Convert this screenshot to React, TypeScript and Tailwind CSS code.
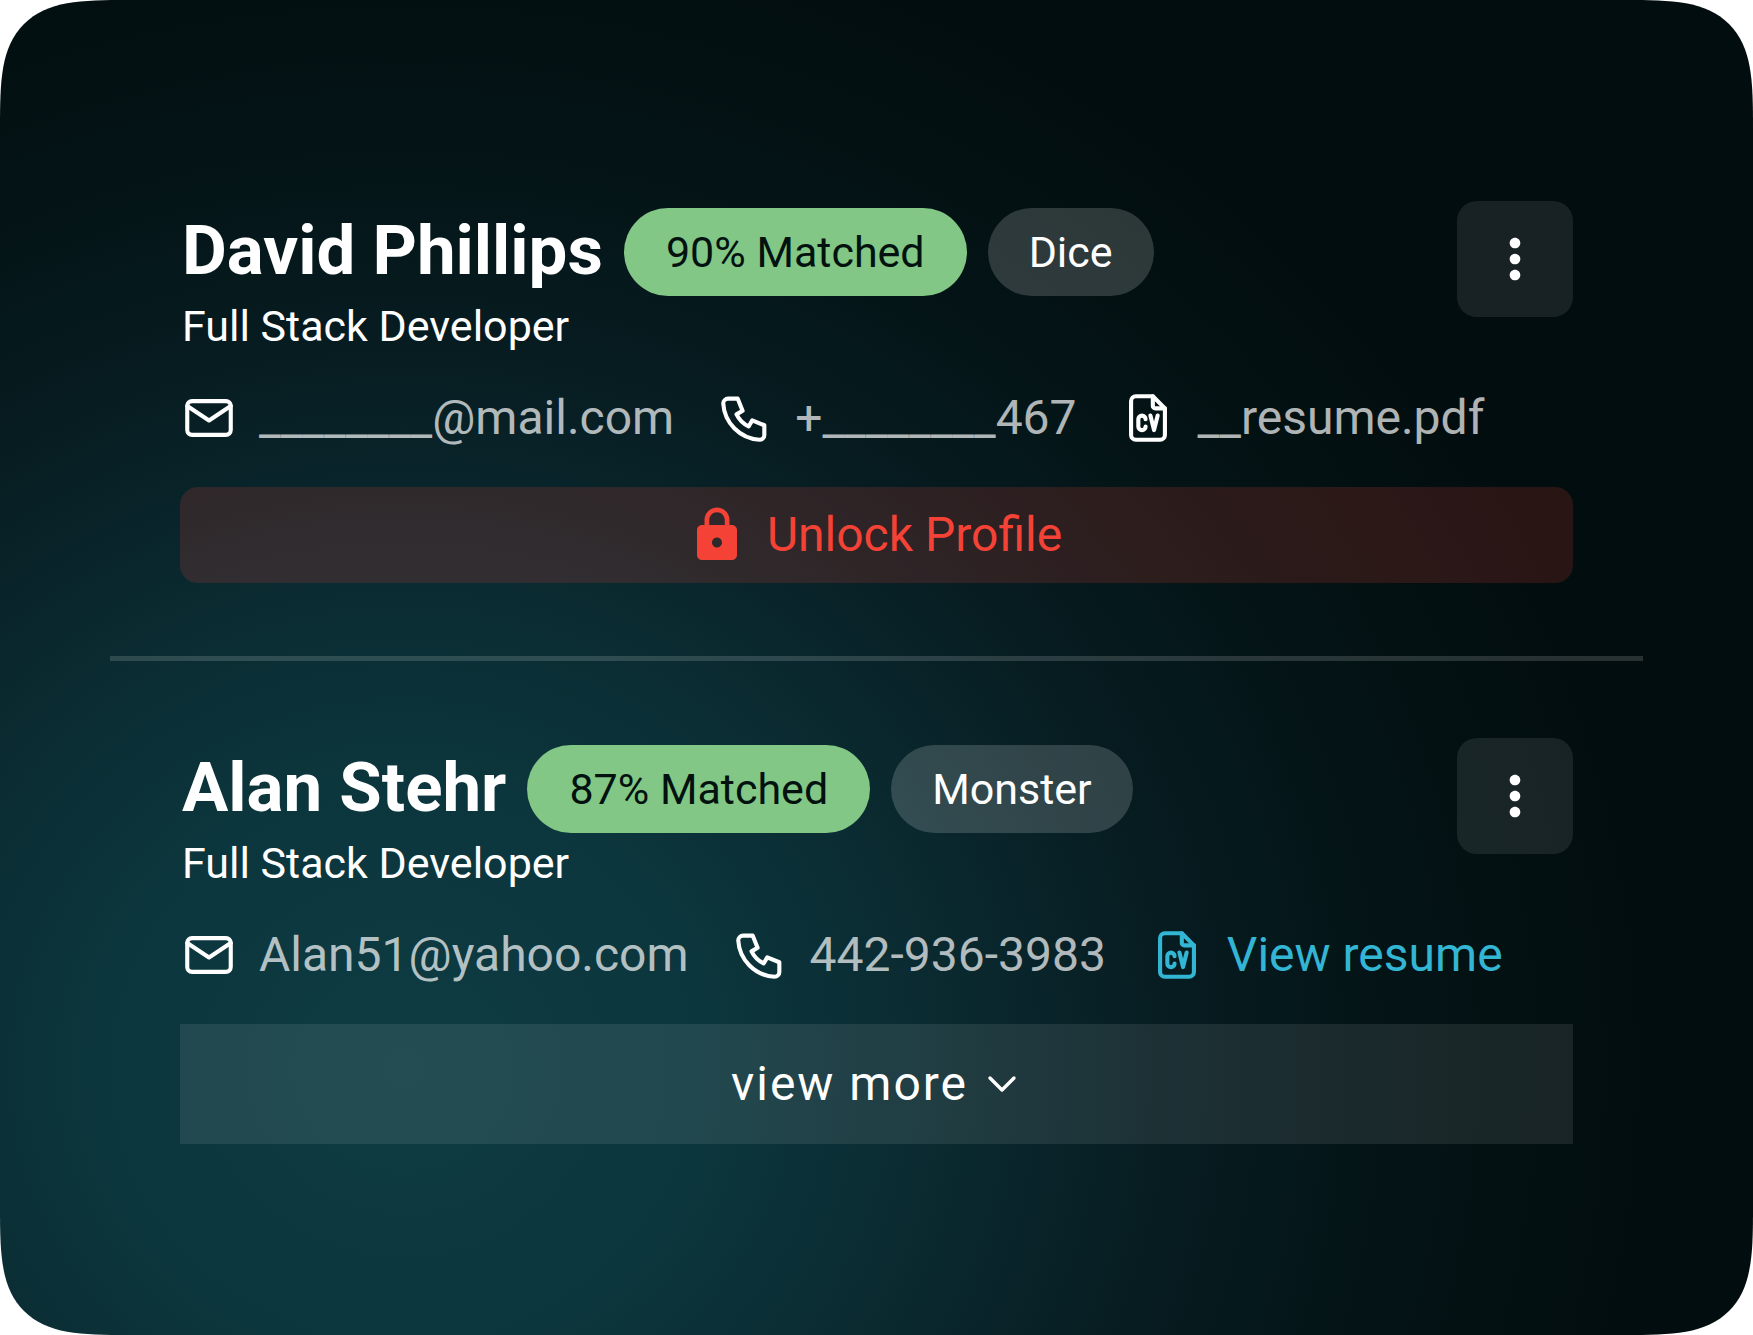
import { MdLock, MdMoreVert } from 'react-icons/md';
import { TbChevronDown, TbFileCv, TbMail, TbPhone } from 'react-icons/tb';

interface Candidate {
  name: string;
  role: string;
  match: number;
  source: string;
  email: string;
  phone: string;
  resume: string;
  locked: boolean;
}

const candidates: Candidate[] = [
  {
    name: 'David Phillips',
    role: 'Full Stack Developer',
    match: 90,
    source: 'Dice',
    email: '________@mail.com',
    phone: '+________467',
    resume: '__resume.pdf',
    locked: true,
  },
  {
    name: 'Alan Stehr',
    role: 'Full Stack Developer',
    match: 87,
    source: 'Monster',
    email: 'Alan51@yahoo.com',
    phone: '442-936-3983',
    resume: 'View resume',
    locked: false,
  },
];

const iconProps = { size: 58, strokeWidth: 1.7, className: 'shrink-0' };

function CandidateCard({ candidate }: { candidate: Candidate }) {
  return (
    <article className="px-[70px]">
      <div className="flex items-start justify-between">
        <div className="pt-[7px] pl-[2px]">
          <div className="flex h-[88px] items-center gap-[21px]">
            <h2 className="pb-[2px] text-[69px] leading-[80px] font-bold whitespace-nowrap">{candidate.name}</h2>
            <span className="flex h-[88px] items-center rounded-full bg-[#82c785] px-[42px] text-[43px] whitespace-nowrap text-[#03120f]">
              {candidate.match}% Matched
            </span>
            <span className="flex h-[88px] items-center rounded-full bg-white/17 px-[41px] text-[43px]">
              {candidate.source}
            </span>
          </div>
          <p className="mt-1 text-[43px] leading-[52px]">{candidate.role}</p>
        </div>
        <button
          type="button"
          aria-label="More options"
          className="flex size-[116px] items-center justify-center rounded-[20px] bg-white/9"
        >
          <MdMoreVert size={64} />
        </button>
      </div>

      {/* Contact details */}
      <div className="mt-[37px] flex h-[58px] items-center gap-[42px] text-[48px] leading-[58px] whitespace-nowrap">
        <span className="flex items-center gap-[21px]">
          <TbMail {...iconProps} />
          <span className="text-white/70">{candidate.email}</span>
        </span>
        <span className="flex items-center gap-[21px]">
          <TbPhone {...iconProps} />
          <span className="text-white/70">{candidate.phone}</span>
        </span>
        {candidate.locked ? (
          <span className="flex items-center gap-[21px]">
            <TbFileCv {...iconProps} />
            <span className="text-white/70">{candidate.resume}</span>
          </span>
        ) : (
          <a href="#resume" className="flex items-center gap-[21px] text-[#33b5d4]">
            <TbFileCv {...iconProps} />
            {candidate.resume}
          </a>
        )}
      </div>

      {candidate.locked ? (
        <button
          type="button"
          className="mt-10 flex h-24 w-full items-center justify-center gap-5 rounded-[18px] bg-[#f44336]/17 pr-1 text-[48px] text-[#f44336]"
        >
          <MdLock size={60} />
          Unlock Profile
        </button>
      ) : (
        <button
          type="button"
          className="mt-10 flex h-[120px] w-full items-center justify-center gap-2.5 bg-white/9 pl-1 text-[48px] tracking-[2px]"
        >
          view more
          <TbChevronDown size={48} strokeWidth={1.7} />
        </button>
      )}
    </article>
  );
}

export default function App() {
  return (
    <div className="bg-white">
      <main className="min-h-screen rounded-[128px] bg-[#020d0f] bg-[radial-gradient(1260px_1180px_at_23%_80%,#0e3b42_0%,#0c363d_24%,#0a2a30_43%,#071d22_60%,#041416_78%,#020d0f_100%)] px-[110px] pt-[201px] pb-[120px] font-[Roboto,sans-serif] text-white [corner-shape:superellipse(1.74)]">
        <CandidateCard candidate={candidates[0]} />
        <hr className="mt-[73px] mb-[77px] border-t-[5px] border-white/15" />
        <CandidateCard candidate={candidates[1]} />
      </main>
    </div>
  );
}
